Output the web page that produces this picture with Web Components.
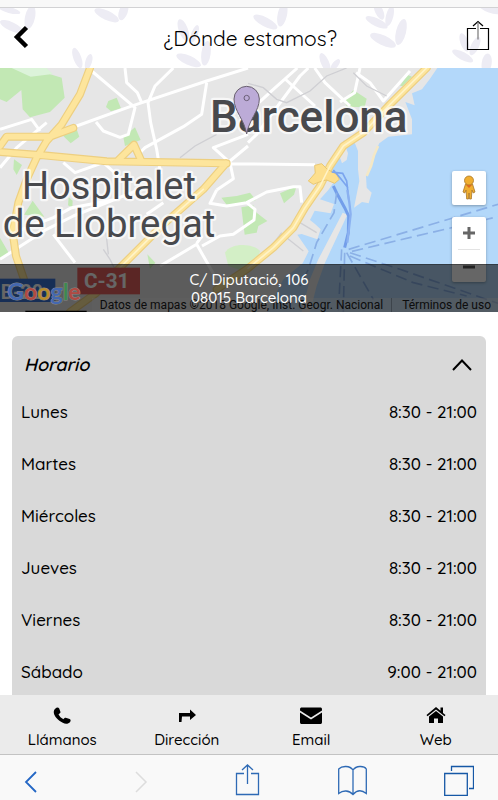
<!DOCTYPE html>
<html lang="es">
<head>
  <meta charset="utf-8">
  <meta name="viewport" content="width=device-width, initial-scale=1">
  <title>¿Dónde estamos?</title>
  <style>
    body {
      margin: 0;
      height: 100vh;
      display: flex;
      flex-direction: column;
      background: #fff;
      color: #000;
      font-family: Quicksand, Lato, sans-serif;
      font-size: 17px;
      font-weight: 500;
    }

    main {
      flex: 1;
      min-height: 0;
      overflow: hidden;
    }
  </style>
</head>
<body>
  <page-header>¿Dónde estamos?</page-header>

  <main>
    <location-map>
      <span slot="street">C/ Diputació, 106</span>
      <span slot="city">08015 Barcelona</span>
    </location-map>

    <opening-hours label="Horario">
      <hours-row day="Lunes" time="8:30 - 21:00"></hours-row>
      <hours-row day="Martes" time="8:30 - 21:00"></hours-row>
      <hours-row day="Miércoles" time="8:30 - 21:00"></hours-row>
      <hours-row day="Jueves" time="8:30 - 21:00"></hours-row>
      <hours-row day="Viernes" time="8:30 - 21:00"></hours-row>
      <hours-row day="Sábado" time="9:00 - 21:00"></hours-row>
    </opening-hours>
  </main>

  <action-bar>
    <action-link icon="phone">Llámanos</action-link>
    <action-link icon="turn">Dirección</action-link>
    <action-link icon="mail">Email</action-link>
    <action-link icon="home">Web</action-link>
  </action-bar>
  <browser-toolbar></browser-toolbar>

  <template id="page-header">
    <style>
      :host {
        display: block;
        flex: none;
      }

      .strip {
        height: 7px;
        background: #f8f8f8;
        border-bottom: 1px solid #d2d2d4;
      }

      header {
        position: relative;
        height: 60px;
        box-sizing: border-box;
        padding: 0 6px 0 8px;
        display: flex;
        align-items: center;
        justify-content: space-between;
      }

      .leaves {
        position: absolute;
        inset: 0;
        width: 100%;
        height: 100%;
        fill: #edecf4;
      }

      h1 {
        position: relative;
        margin: 0;
        font-size: 21px;
        line-height: 28px;
        font-weight: 400;
      }

      button {
        position: relative;
        width: 26px;
        height: 36px;
        padding: 0;
        border: 0;
        background: none;
        color: inherit;
      }

      button svg {
        display: block;
      }
    </style>
    <div class="strip"></div>
    <header>
      <svg class="leaves" viewBox="0 24 1494 180" preserveAspectRatio="xMidYMid slice" aria-hidden="true">
        <ellipse cx="90" cy="52" rx="15" ry="36" transform="rotate(12 90 52)"/>
        <ellipse cx="35" cy="80" rx="13" ry="38" transform="rotate(-65 35 80)"/>
        <ellipse cx="28" cy="30" rx="9" ry="34" transform="rotate(-75 28 30)"/>
        <ellipse cx="320" cy="46" rx="14" ry="40" transform="rotate(-65 320 46)"/>
        <ellipse cx="370" cy="35" rx="13" ry="27" transform="rotate(20 370 35)"/>
        <ellipse cx="232" cy="174" rx="12" ry="32" transform="rotate(-20 232 174)"/>
        <ellipse cx="266" cy="185" rx="10" ry="24" transform="rotate(16 266 185)"/>
        <ellipse cx="550" cy="90" rx="14" ry="34" transform="rotate(-20 550 90)"/>
        <ellipse cx="584" cy="101" rx="10" ry="27" transform="rotate(20 584 101)"/>
        <ellipse cx="566" cy="181" rx="14" ry="40" transform="rotate(-66 566 181)"/>
        <ellipse cx="618" cy="160" rx="14" ry="37" transform="rotate(8 618 160)"/>
        <ellipse cx="796" cy="66" rx="14" ry="40" transform="rotate(-62 796 66)"/>
        <ellipse cx="847" cy="44" rx="14" ry="36" transform="rotate(12 847 44)"/>
        <ellipse cx="975" cy="188" rx="12" ry="31" transform="rotate(-24 975 188)"/>
        <ellipse cx="1006" cy="194" rx="9" ry="20" transform="rotate(38 1006 194)"/>
        <ellipse cx="1130" cy="67" rx="12" ry="36" transform="rotate(-65 1130 67)"/>
        <ellipse cx="1137" cy="33" rx="12" ry="28" transform="rotate(-25 1137 33)"/>
        <ellipse cx="1169" cy="48" rx="11" ry="31" transform="rotate(14 1169 48)"/>
        <ellipse cx="1149" cy="121" rx="15" ry="42" transform="rotate(-65 1149 121)"/>
        <ellipse cx="1203" cy="96" rx="15" ry="40" transform="rotate(14 1203 96)"/>
        <ellipse cx="1393" cy="127" rx="12" ry="29" transform="rotate(-20 1393 127)"/>
        <ellipse cx="1425" cy="138" rx="12" ry="30" transform="rotate(25 1425 138)"/>
        <ellipse cx="1388" cy="168" rx="12" ry="35" transform="rotate(-62 1388 168)"/>
        <ellipse cx="1460" cy="190" rx="15" ry="30" transform="rotate(8 1460 190)"/>
        <ellipse cx="1470" cy="26" rx="12" ry="36" transform="rotate(-70 1470 26)"/>
      </svg>
      <button aria-label="Volver">
        <svg width="26" height="36" viewBox="0 0 26 36" fill="none" stroke="#000" stroke-width="4.5"><path d="M18.5 7.500 9 17l9.500 9.500"/></svg>
      </button>
      <h1><slot></slot></h1>
      <button aria-label="Compartir">
        <svg width="26" height="36" viewBox="0 0 26 36" fill="none" stroke="#000" stroke-width="1.200"><path d="M10 8.500H1.500v21h21v-21H14M7 6l5-4.500L17 6"/><path stroke="#777" d="M12 2v17.500"/></svg>
      </button>
    </header>
  </template>

  <template id="location-map">
    <style>
      :host {
        display: block;
        position: relative;
        height: 244px;
        overflow: hidden;
        background: #e6e6e6;
        font-family: Roboto, sans-serif;
        font-weight: 400;
      }

      .map {
        display: block;
        width: 100%;
        height: 100%;
      }

      .logo {
        position: absolute;
        inset: 0;
        pointer-events: none;
      }

      .controls {
        position: absolute;
        top: 103px;
        right: 12px;
        display: grid;
        gap: 12px;
      }

      .group {
        width: 34px;
        border-radius: 2px;
        background: #fff;
        box-shadow: 0 1px 3px rgba(0, 0, 0, .3);
      }

      button {
        display: grid;
        place-items: center;
        width: 100%;
        height: 32px;
        padding: 0;
        border: 0;
        background: none;
      }

      .person {
        height: 34px;
      }

      hr {
        width: 22px;
        margin: 0 auto;
        border: 0;
        border-top: 1px solid #e3e3e3;
      }

      .legal {
        position: absolute;
        right: 0;
        bottom: 0;
        display: flex;
        gap: 8px;
        padding: 0 7px 0 8px;
        background: rgba(245, 245, 245, .4);
        color: #222;
        font-size: 12px;
        line-height: 14px;
      }

      .legal a {
        padding-left: 10px;
        border-left: 1px solid #9ab;
        color: inherit;
        text-decoration: none;
      }

      address {
        position: absolute;
        left: 0;
        right: 0;
        bottom: 0;
        height: 48px;
        box-sizing: border-box;
        padding-top: 6px;
        border-top: 1px solid rgba(0, 0, 0, .3);
        background: rgba(0, 0, 0, .6);
        color: #fff;
        display: flex;
        flex-direction: column;
        align-items: center;
        font: 500 15px/18px Quicksand, Lato, sans-serif;
      }
    </style>
    <svg class="map" viewBox="0 6 1494 732" preserveAspectRatio="xMidYMid slice">
      <!-- sea and harbour, then the breakwater over it -->
      <path fill="#b3d8fa" d="M1312 6 1290 38 1266 70 1236 82 1244 118 1216 108 1236 160 1236 205 1165 212 1138 232 1124 262 1114 304 1098 330 1100 365 1115 380 1106 412 1086 408 1062 425 1078 345 1074 310 1074 255 1062 225 1030 224 1044 262 1040 282 1026 292 1018 270 996 278 990 305 1004 345 985 372 960 400 1002 414 992 442 944 434 930 462 945 474 962 490 952 520 905 504 892 506 926 556 908 592 850 640 800 738H1494V6Z"/>
      <path fill="#e6e6e6" d="M1028 440 1042 446 975 590 950 660 930 738H905L930 640 955 580Z"/>
      <path fill="none" stroke="#f4e8c6" stroke-width="8" d="M1134 240 1122 268 1113 300 1100 330"/>

      <!-- parks -->
      <g fill="#c2e8b4">
        <path d="M0 6H90L185 35 194 95 150 138 90 154 68 130 64 72 20 108 0 100Z"/>
        <path fill="#dcf3da" d="M35 6H140L158 24 92 32Z"/>
        <path d="M325 105 350 95 363 127 333 136 318 123ZM186 206 230 190 238 212 212 232ZM370 214 405 184 422 222 375 240ZM42 280 66 297 50 327 40 310ZM1060 72 1100 98 1094 124 1040 122 1034 104ZM1200 60 1222 26 1236 32 1208 60ZM72 446 98 404 133 452ZM206 394 218 404 217 425 204 418ZM0 515 26 560 0 580ZM442 565 466 590 450 608ZM664 395 710 390 750 380 768 402 735 414 680 416ZM724 424 760 418 770 440 802 465 775 480 770 500 734 506ZM840 382 890 360 882 386 852 412Z"/>
        <path fill="#d3efc6" d="M675 560C690 530 760 530 780 555L770 590 720 612 685 600Z"/>
      </g>

      <!-- streets -->
      <g fill="none" stroke="#fff" stroke-width="9" stroke-linejoin="round">
        <path d="M0 190 95 160 120 195M230 180 390 122 620 45 744 6M275 15 405 125 385 205 360 214 310 195 288 168M375 6 380 50 412 80 425 110M520 6 465 60 444 110 452 170 470 250 482 325M620 50 605 145 550 182 435 245 410 270M744 205 640 245 690 290 700 338 650 372M744 240 690 285M690 293 945 296M190 290 225 320 310 290 355 330M0 305 50 245 140 170M744 230 770 205 900 30 925 6"/>
        <path d="M744 140 820 70 892 6M852 36 945 120M944 6 975 50 1050 120M1080 6 1064 80 1020 108M1068 20 1110 50 1150 105 1230 15M0 580 140 490 220 450 420 370M40 500 160 455 215 425 350 400M160 505 225 590M480 600 590 535 650 640M590 532 606 510M650 372 630 412 680 420 740 410 765 430 762 462 700 505 660 510 606 540M740 410 800 378 880 362 900 362 905 410M440 445 490 410"/>
      </g>
      <g fill="none" stroke="#cfcfd3" stroke-width="4">
        <path d="M540 275 585 240 650 205M744 52 790 65 830 100 860 110 930 75 980 30 1040 6M1060 20 1100 60 1160 90M310 550 330 580 345 610M318 500 325 565M800 560 845 500M860 515 910 555M900 470 950 500"/>
      </g>

      <!-- main roads, drawn twice for the darker edge -->
      <g fill="none" stroke-linecap="round" stroke-linejoin="round">
        <g stroke="#edcf80" stroke-width="24">
          <path d="M270 6 240 85 185 175 140 225 110 275 80 340 55 410 38 500 48 570 72 640M0 240 20 212 150 212 220 186M0 258 130 268 320 286 680 292M355 282 402 236 422 280M678 292 610 370 490 475 330 635 290 680 210 738M1280 6 1170 115 1090 200 1030 240 990 300 960 360 915 425 880 485 820 545 744 607 650 670"/>
        </g>
        <g stroke="#fde59c" stroke-width="17">
          <path d="M270 6 240 85 185 175 140 225 110 275 80 340 55 410 38 500 48 570 72 640M0 240 20 212 150 212 220 186M0 258 130 268 320 286 680 292M355 282 402 236 422 280M678 292 610 370 490 475 330 635 290 680 210 738M1280 6 1170 115 1090 200 1030 240 990 300 960 360 915 425 880 485 820 545 744 607 650 670"/>
        </g>
        <path fill="#fddf8d" stroke="#e9c873" stroke-width="3" d="M945 298 965 293 982 310 1010 325 1018 340 1004 352 980 342 966 345 940 355 925 345 945 322Z"/>
        <path stroke="#fff3c7" stroke-width="5" d="M1280 6 1170 115 1090 200 1030 240 990 300 960 360 915 425 880 485 820 545 744 607M610 370 490 475 330 635"/>
      </g>

      <!-- ferry lines -->
      <g fill="none" stroke="#8bb0e6" stroke-width="5">
        <path stroke="#7ba5ee" d="M995 318 1028 322 1040 345 1046 400M1000 312 1020 335 1044 365"/>
        <path stroke="#739eea" stroke-width="9" d="M1000 360 1012 385 1034 425 1046 450 1045 500 1034 545"/>
        <path stroke="#8bb1f0" stroke-width="7" d="M1042 372 1048 410 1052 445 1042 530"/>
        <g stroke-dasharray="34 16">
          <path d="M1046 550 1494 415M1056 556 1494 452M1010 380 1002 440 950 530 925 610 900 660M1025 550 1015 738M1034 560 1030 738M1040 560 1120 700M1050 560 1200 610 1494 712M1050 570 1240 650 1400 690"/>
        </g>
      </g>

      <g font-family="Roboto, sans-serif" fill="#48494d" stroke="#fff" stroke-opacity=".7" stroke-width="14" stroke-linejoin="round" paint-order="stroke">
        <text x="630" y="199" font-size="132" font-weight="500">Barcelona</text>
        <text x="66" y="400" font-size="114">Hospitalet</text>
        <text x="8" y="514" font-size="115">de Llobregat</text>
      </g>

      <path fill="#bcabd7" stroke="#69606f" stroke-width="3" d="M740 204C733 160 702 135 702 99A38 38 0 0 1 778 99C778 135 747 160 740 204Z"/>
      <circle cx="740" cy="96" r="8" fill="none" stroke="#6c6078" stroke-width="3"/>

      <!-- road signs -->
      <rect x="232" y="605" width="188" height="80" fill="#e4605c"/>
      <rect x="0" y="638" width="166" height="70" fill="#3a74d4"/>
      <g font-family="Roboto, sans-serif" font-weight="700" fill="#fff">
        <text x="252" y="667" font-size="62">C-31</text>
        <text x="2" y="698" font-size="58">B-20</text>
      </g>
      <path fill="#000" d="M76 734H260V738H76Z"/>
    </svg>
    <div class="controls">
      <div class="group">
        <button class="person" aria-label="Street View">
          <svg width="16" height="26" viewBox="0 0 16 26" fill="#f0ae30" stroke="#a8762a" stroke-width=".8"><path d="M4.500 9h7l2.500 8-1.800 1-1.200-3-.7 9H8.500L8 18l-.5 6H5.700L5 15l-1.200 3L2 17Z"/><circle cx="8" cy="5.500" r="4.500"/><path fill="#dc6a21" stroke="none" d="m5 10 3 3 3-3Z"/></svg>
        </button>
      </div>
      <div class="group">
        <button aria-label="Acercar"><svg width="14" height="14" viewBox="0 0 14 14"><path fill="#666" d="M5.500 1h3v4.500H13v3H8.500V13h-3V8.500H1v-3h4.500Z"/></svg></button>
        <hr>
        <button aria-label="Alejar"><svg width="14" height="14" viewBox="0 0 14 14"><path fill="#555" d="M1 6.500h12v3H1Z"/></svg></button>
      </div>
    </div>
    <div class="legal">
      <span>Datos de mapas ©2018 Google, Inst. Geogr. Nacional</span>
      <a href="#terminos">Términos de uso</a>
    </div>
    <address><slot name="street"></slot><slot name="city"></slot></address>
    <svg class="map logo" viewBox="0 6 1494 732" preserveAspectRatio="xMidYMid slice">
      <text x="22" y="702" font-family="Lato, sans-serif" font-size="69" font-weight="700" stroke="#888" stroke-width="3" paint-order="stroke"><tspan fill="#4468b0">G</tspan><tspan fill="#b04a42">o</tspan><tspan fill="#b88c2c">o</tspan><tspan fill="#4468b0">g</tspan><tspan fill="#3d8a50">l</tspan><tspan fill="#b04a42">e</tspan></text>
    </svg>
  </template>

  <template id="opening-hours">
    <style>
      :host {
        display: block;
        margin: 24px 12px 0;
        border-radius: 6px 6px 0 0;
        background: #d9d9d9;
      }

      button {
        width: 100%;
        height: 49px;
        padding: 8px 14px 0 12px;
        border: 0;
        background: none;
        color: inherit;
        display: flex;
        align-items: center;
        justify-content: space-between;
        font: italic 600 18px/24px Quicksand, Lato, sans-serif;
      }

      button[aria-expanded="false"] svg {
        transform: rotate(180deg);
      }

      table {
        width: 100%;
        border-collapse: collapse;
        font-size: 17px;
      }

      th, td {
        height: 52px;
        padding: 0 9px;
        font-weight: 500;
        text-align: left;
      }

      td {
        text-align: right;
      }
    </style>
    <button aria-expanded="true" aria-controls="hours">
      <span></span>
      <svg width="20" height="14" viewBox="0 0 20 14" fill="none" stroke="#000" stroke-width="2"><path d="m1 12 9-9.500L19 12"/></svg>
    </button>
    <table id="hours"><tbody></tbody></table>
  </template>

  <script>
    const ICONS = {
      phone: '<path d="M3.500 2.500C4.500 1.300 6.500 1.300 7.200 2.500L8.500 6C8.500 7 7.500 7.800 6.500 8.200c1 2.200 2.800 4 5 5 .6-.8 1.200-1.500 2.200-1.400l4 1.200c1 .5 1.300 1.900.4 2.900-1.500 2-4.600 2.400-7.300.9C6 14.500 2.300 10.500 1.800 6.800 1.600 5 2.300 3.500 3.500 2.500Z"/>',
      turn: '<path d="M2 16V7h11V3.500L19 9l-6 5v-3.500H5L4.500 16Z"/>',
      mail: '<path d="M0 3.500C0 2 .5 1.500 2 1.500h18c1.500 0 2 .5 2 2v1L11 11.500 0 4.500Z"/><path d="m0 6.500 11 7 11-7V16c0 1.500-.5 2-2 2H2c-1.500 0-2-.5-2-2Z"/>',
      home: '<path d="M3 10.500 10 5l7 5.500V17h-5v-4.500H8V17H3Z"/><path d="M10 1 .5 9l1 1.200L10 3.500l8.500 6.700 1-1.200L17 7V1.500h-2.500v3.300Z"/>'
    };

    class PageHeader extends HTMLElement {
      connectedCallback() {
        this.attachShadow({ mode: 'open' });
        this.shadowRoot.append(document.getElementById('page-header').content.cloneNode(true));
      }
    }

    class LocationMap extends HTMLElement {
      connectedCallback() {
        this.attachShadow({ mode: 'open' });
        this.shadowRoot.append(document.getElementById('location-map').content.cloneNode(true));
      }
    }

    // Holds the data of one line of the table in <opening-hours>
    class HoursRow extends HTMLElement {
      toTableRow() {
        const row = document.createElement('tr');
        const day = document.createElement('th');
        day.scope = 'row';
        day.textContent = this.getAttribute('day');
        const time = document.createElement('td');
        time.textContent = this.getAttribute('time');
        row.append(day, time);
        return row;
      }
    }

    class OpeningHours extends HTMLElement {
      connectedCallback() {
        this.attachShadow({ mode: 'open' });
        this.shadowRoot.append(document.getElementById('opening-hours').content.cloneNode(true));
        this.shadowRoot.querySelector('span').textContent = this.getAttribute('label');

        const body = this.shadowRoot.querySelector('tbody');
        this.querySelectorAll('hours-row').forEach(row => body.append(row.toTableRow()));
        this.shadowRoot.querySelector('button').addEventListener('click', this.toggle.bind(this));
      }

      toggle() {
        const table = this.shadowRoot.querySelector('table');
        table.hidden = !table.hidden;
        this.shadowRoot.querySelector('button').setAttribute('aria-expanded', String(!table.hidden));
      }
    }

    class ActionBar extends HTMLElement {
      connectedCallback() {
        this.attachShadow({ mode: 'open' });
        this.shadowRoot.innerHTML = `
          <style>
            :host {
              display: block;
              flex: none;
              background: #ebebeb;
              border-bottom: 1px solid #c3c3c3;
            }

            nav {
              display: grid;
              grid-template-columns: repeat(4, 1fr);
            }
          </style>
          <nav><slot></slot></nav>
        `;
      }
    }

    class ActionLink extends HTMLElement {
      connectedCallback() {
        const icon = this.getAttribute('icon');
        const width = icon === 'mail' ? 22 : 20;
        this.attachShadow({ mode: 'open' });
        this.shadowRoot.innerHTML = `
          <style>
            :host {
              display: block;
            }

            a {
              height: 59px;
              box-sizing: border-box;
              padding-top: 11px;
              display: flex;
              flex-direction: column;
              align-items: center;
              gap: 4px;
              color: inherit;
              text-decoration: none;
              font-size: 15px;
              line-height: 20px;
            }
          </style>
          <a href="#${icon}">
            <svg width="${width}" height="20" viewBox="0 0 ${width} 20" aria-hidden="true">${ICONS[icon]}</svg>
            <slot></slot>
          </a>
        `;
      }
    }

    class BrowserToolbar extends HTMLElement {
      connectedCallback() {
        this.attachShadow({ mode: 'open' });
        this.shadowRoot.innerHTML = `
          <style>
            :host {
              display: flex;
              flex: none;
              align-items: center;
              justify-content: space-between;
              height: 45px;
              box-sizing: border-box;
              padding: 0 24px 0 16px;
              background: #f9f9f9;
            }

            button {
              padding: 0;
              border: 0;
              background: none;
            }

            svg {
              display: block;
              fill: none;
              stroke: #2e6ab5;
              stroke-width: 1.300;
            }
          </style>
          <button aria-label="Atrás"><svg width="30" height="36" viewBox="0 0 30 36"><path stroke="#2467c5" stroke-width="1.800" d="M20 12 10 22l10 10"/></svg></button>
          <button aria-label="Adelante" disabled><svg width="30" height="36" viewBox="0 0 30 36"><path stroke="#ddd" stroke-width="1.500" d="m13 12 10 10-10 10"/></svg></button>
          <button aria-label="Compartir"><svg width="30" height="36" viewBox="0 0 30 36"><path d="M14 13.500H6.500v21h22v-21H21M12 10l5.500-5L23 10M17.500 5v19"/></svg></button>
          <button aria-label="Marcadores"><svg width="30" height="36" viewBox="0 0 30 36"><path d="M16 10C13 5.500 5 5.500 1.700 9v24.500C6 30 12 30 16 34.500 20 30 25 30 29.300 33.500V9C27 5.500 19 5.500 16 10ZM16 10v24.500"/></svg></button>
          <button aria-label="Pestañas"><svg width="30" height="36" viewBox="0 0 30 36"><path stroke="#1658a6" d="M.7 13.500h22.600v22H.7ZM7.500 11V6.500h22V28.500H25"/></svg></button>
        `;
      }
    }

    customElements.define('page-header', PageHeader);
    customElements.define('location-map', LocationMap);
    customElements.define('hours-row', HoursRow);
    customElements.define('opening-hours', OpeningHours);
    customElements.define('action-bar', ActionBar);
    customElements.define('action-link', ActionLink);
    customElements.define('browser-toolbar', BrowserToolbar);
  </script>
</body>
</html>
